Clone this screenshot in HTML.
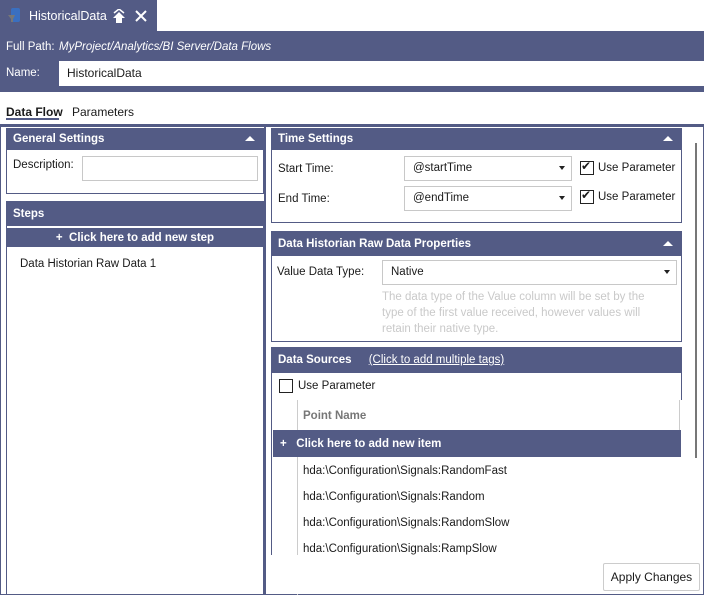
<html><head><style>
body{margin:0;width:704px;height:595px;position:relative;background:#fff;font-family:"Liberation Sans",sans-serif;font-size:11.5px;color:#1a1a1a;overflow:hidden}
div,span{position:absolute;box-sizing:border-box}
.h{background:#535b85;color:#fff;font-weight:bold;padding-left:7px;line-height:22px}
.box{border:1px solid #535b85}
.tri{right:9px;top:8px;width:0;height:0;border-left:5px solid transparent;border-right:5px solid transparent;border-bottom:5px solid #fff}
.in{border:1px solid #c8c8c8;background:#fff;padding-left:8px;line-height:23px}
.dd{right:6px;top:9px;border-left:3px solid transparent;border-right:3px solid transparent;border-top:4px solid #222}
.cb{width:14px;height:14px;border:1px solid #222;background:#fff}
.t{margin-top:1px}
</style></head><body>
<div style="left:0;top:0;width:157px;height:31px;background:#535b85"></div>
<svg style="position:absolute;left:8px;top:8px" width="14" height="16"><rect x="3" y="0" width="9" height="14" rx="2" fill="#3a6fc0"/><path d="M0 7h7l-2 4v3h-2v-3z" fill="#777"/></svg>
<span style="left:29px;top:9px;color:#fff;font-size:12.5px">HistoricalData</span>
<svg style="position:absolute;left:112px;top:9px" width="14" height="14"><path d="M7 3L1 9h3v5h6V9h3z" fill="#fff"/><path d="M2 4L7 0l5 4" stroke="#fff" stroke-width="1.5" fill="none"/></svg>
<svg style="position:absolute;left:135px;top:10px" width="12" height="12"><path d="M1 1L11 11M11 1L1 11" stroke="#fff" stroke-width="2"/></svg>
<div style="left:0;top:31px;width:704px;height:61px;background:#535b85"></div>
<span style="left:6px;top:41px;color:#fff">Full Path:</span>
<span style="left:59px;top:41px;color:#fff;font-style:italic">MyProject/Analytics/BI Server/Data Flows</span>
<span style="left:6px;top:67px;color:#fff">Name:</span>
<div class="in" style="left:59px;top:61px;width:645px;height:25px;border:none;padding-left:8px;line-height:25px;font-size:12px">HistoricalData</div>
<span style="left:6px;top:105px;font-weight:bold;font-size:12px">Data Flow</span>
<span style="left:72px;top:105px;font-size:12px">Parameters</span>
<div style="left:6px;top:118px;width:53px;height:2px;background:#535b85"></div>
<div style="left:0;top:124px;width:704px;height:471px;border:1px solid #535b85;border-top:none;background:#535b85"></div>
<div style="left:1px;top:124px;width:702px;height:470px;background:#fff"></div>
<div style="left:0;top:124px;width:704px;height:3px;background:#535b85"></div>
<div style="left:264px;top:124px;width:2px;height:471px;background:#535b85"></div>
<!-- left -->
<div class="box" style="left:6px;top:128px;width:258px;height:66px"></div>
<div class="h" style="left:6px;top:128px;width:258px;height:22px;line-height:23px">General Settings<div class="tri"></div></div>
<span style="left:13px;top:159px">Description:</span>
<div class="in" style="left:82px;top:156px;width:176px;height:25px"></div>
<div class="box" style="left:6px;top:201px;width:258px;height:394px"></div>
<div class="h" style="left:6px;top:201px;width:258px;height:25px;line-height:26px">Steps</div>
<div class="h" style="left:6px;top:228px;width:258px;height:19px;line-height:20px;text-align:center;padding:0">+&nbsp; Click here to add new step</div>
<span style="left:20px;top:258px">Data Historian Raw Data 1</span>
<!-- right -->
<div class="box" style="left:271px;top:128px;width:411px;height:95px"></div>
<div class="h" style="left:271px;top:128px;width:411px;height:22px;line-height:23px">Time Settings<div class="tri"></div></div>
<span style="left:278px;top:163px">Start Time:</span>
<div class="in" style="left:404px;top:156px;width:168px;height:25px">@startTime<div class="dd"></div></div>
<div class="cb" style="left:580px;top:161px"></div><span style="left:581px;top:159px;font-size:12px">✔</span>
<span style="left:598px;top:162px">Use Parameter</span>
<span style="left:278px;top:193px">End Time:</span>
<div class="in" style="left:404px;top:186px;width:168px;height:25px">@endTime<div class="dd"></div></div>
<div class="cb" style="left:580px;top:190px"></div><span style="left:581px;top:188px;font-size:12px">✔</span>
<span style="left:598px;top:191px">Use Parameter</span>
<div class="box" style="left:271px;top:231px;width:411px;height:111px"></div>
<div class="h" style="left:271px;top:231px;width:411px;height:25px;line-height:26px">Data Historian Raw Data Properties<div class="tri" style="top:10px"></div></div>
<span style="left:277px;top:266px">Value Data Type:</span>
<div class="in" style="left:382px;top:260px;width:295px;height:25px">Native<div class="dd"></div></div>
<div style="left:382px;top:289px;width:285px;color:#c9c9c9;line-height:16px">The data type of the Value column will be set by the type of the first value received, however values will retain their native type.</div>
<div style="left:271px;top:347px;width:1px;height:208px;background:#535b85"></div>
<div style="left:681px;top:347px;width:1px;height:53px;background:#535b85"></div>
<div class="h" style="left:271px;top:347px;width:411px;height:26px;line-height:27px">Data Sources <span style="position:static;margin-left:14px;font-weight:normal;text-decoration:underline">(Click to add multiple tags)</span></div>
<div class="cb" style="left:279px;top:379px;background:#fff"></div>
<span style="left:298px;top:380px">Use Parameter</span>
<div style="left:297px;top:400px;width:1px;height:195px;background:#ccc"></div>
<div style="left:679px;top:400px;width:1px;height:30px;background:#ccc"></div>
<span style="left:303px;top:410px;color:#777;font-weight:bold">Point Name</span>
<div class="h" style="left:273px;top:430px;width:408px;height:27px;line-height:28px">+&nbsp;&nbsp; Click here to add new item</div>
<span style="left:303px;top:465px">hda:\Configuration\Signals:RandomFast</span>
<span style="left:303px;top:491px">hda:\Configuration\Signals:Random</span>
<span style="left:303px;top:517px">hda:\Configuration\Signals:RandomSlow</span>
<span style="left:303px;top:543px">hda:\Configuration\Signals:RampSlow</span>
<div style="left:266px;top:555px;width:437px;height:39px;background:#fff"></div>
<div style="left:695px;top:143px;width:2px;height:315px;background:#777"></div>
<div style="left:603px;top:563px;width:97px;height:28px;border:1px solid #ccc;border-radius:2px;text-align:center;line-height:26px;font-size:12px">Apply Changes</div>
</body></html>
